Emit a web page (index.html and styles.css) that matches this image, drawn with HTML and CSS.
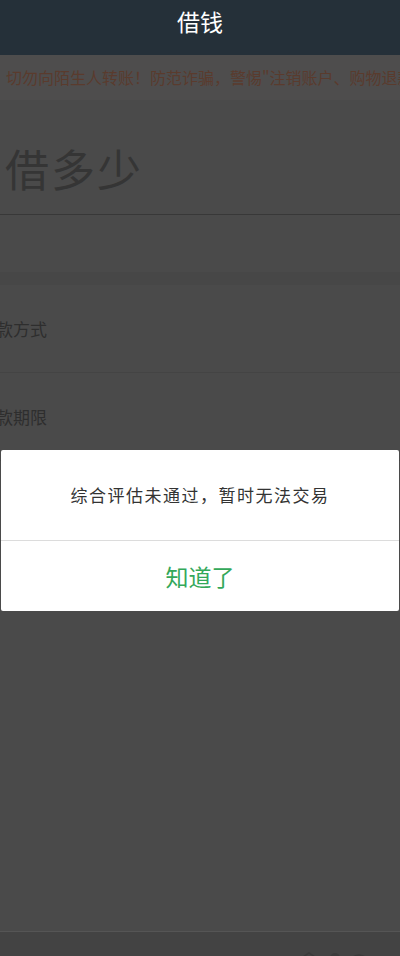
FILE: index.html
```html
<!DOCTYPE html>
<html lang="zh-CN">
<head>
    <meta charset="UTF-8">
    <meta name="viewport" content="width=device-width, initial-scale=1.0">
    <title>借钱</title>
    <link rel="stylesheet" href="styles.css">
</head>
<body>
    <header class="topbar">借钱</header>
    <div class="notice">切勿向陌生人转账！防范诈骗，警惕"注销账户、购物退款、刷单返利"等骗局</div>
    <main class="page">
        <section class="amount">
            <div class="amount-title">借多少</div>
        </section>
        <div class="amount-blank"></div>
        <div class="gap"></div>
        <div class="row"><span class="row-label">还款方式</span></div>
        <div class="row"><span class="row-label">还款期限</span></div>
        <div class="dialog">
            <div class="dialog-msg">综合评估未通过，暂时无法交易</div>
            <div class="dialog-btn">知道了</div>
        </div>
    </main>
    <footer class="tabbar">
        <svg class="tab-icons" width="80" height="6" viewBox="0 0 80 6">
            <path d="M8 7 L14 3 L20 7" fill="none" stroke="#3a3a3a" stroke-width="1.5"/>
            <circle cx="40" cy="8" r="5" fill="#3b3b3b"/>
            <path d="M58 7 Q64 3 70 7" fill="none" stroke="#3a3a3a" stroke-width="1.5"/>
        </svg>
    </footer>
</body>
</html>
```

FILE: styles.css
```css
*{
    margin:0;
    padding:0;
    box-sizing:border-box;
}
body{
    width:400px;
    min-height:956px;
    display:flex;
    flex-direction:column;
    background:#4a4a4a;
    font-family:"Noto Sans CJK SC","Noto Sans",sans-serif;
    overflow:hidden;
}
.topbar{
    height:55px;
    background:#253039;
    color:#fff;
    font-size:23px;
    text-align:center;
    line-height:42px;
}
.notice{
    height:45px;
    background:#4e4d4d;
    color:#5a3b2d;
    font-size:16px;
    line-height:45px;
    padding-left:6px;
    white-space:nowrap;
    overflow:hidden;
}
.page{
    flex:1;
    position:relative;
}
.amount{
    height:115px;
    border-bottom:1px solid #383838;
    display:flex;
    align-items:center;
    padding:22px 0 0 5px;
}
.amount-title{
    font-size:44px;
    letter-spacing:2px;
    color:#353535;
}
.amount-blank{
    height:57px;
}
.gap{
    height:13px;
    background:#474747;
}
.row{
    height:88px;
    border-bottom:1px solid #444;
    display:flex;
    align-items:center;
    overflow:hidden;
}
.row-label{
    margin-left:-21px;
    font-size:17px;
    color:#2e2e2e;
}
.dialog{
    position:absolute;
    top:350px;
    left:1px;
    right:1px;
    background:#fff;
    border-radius:2px;
}
.dialog-msg{
    height:91px;
    border-bottom:1px solid #dcdcdc;
    display:flex;
    align-items:center;
    justify-content:center;
    font-size:17px;
    letter-spacing:1.5px;
    color:#333;
    padding-bottom:2px;
}
.dialog-btn{
    height:70px;
    display:flex;
    align-items:center;
    justify-content:center;
    font-size:23px;
    color:#33a85a;
}
.tabbar{
    height:25px;
    border-top:1px solid #555;
    background:#434343;
    position:relative;
}
.tab-icons{
    position:absolute;
    right:25px;
    bottom:0;
}
```
